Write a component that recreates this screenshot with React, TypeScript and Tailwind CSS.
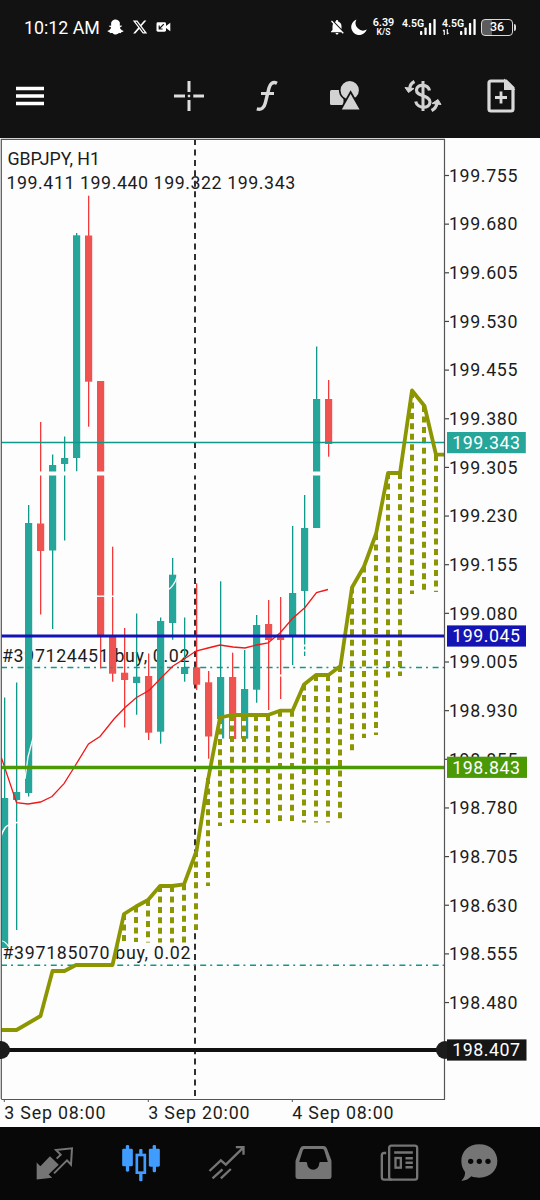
import type { ReactNode } from "react";
import { FaSnapchatGhost } from "react-icons/fa";
import { FaXTwitter } from "react-icons/fa6";
import { MdNotificationsOff } from "react-icons/md";

type Candle = { up: boolean; high: number; low: number; top: number; bottom: number };

const TEAL = "#26a69a";
const TEAL_DARK = "#0f998a";
const RED = "#ef5350";
const RED_DARK = "#f23a3a";
const OLIVE = "#8c9600";
const PAPER = "#fdfdfd";

const c = (up: boolean, high: number, low: number, top: number, bottom: number): Candle => ({ up, high, low, top, bottom });

const candles: Candle[] = [
  c(true, 697.5, 948, 798, 948),
  c(true, 682.5, 930, 792, 800),
  c(true, 505, 796.5, 523, 793),
  c(false, 422, 614.5, 523.5, 551),
  c(true, 454.5, 629, 465, 550.5),
  c(true, 436.5, 540.5, 458, 464),
  c(true, 233, 471.5, 235.3, 458),
  c(false, 195.7, 426.7, 235.5, 381.7),
  c(false, 381, 668.5, 381, 635),
  c(false, 546.7, 681.7, 635, 673.7),
  c(false, 628, 727.5, 672.7, 680),
  c(true, 613.5, 714.7, 676.7, 683),
  c(false, 653.5, 740, 676, 732.7),
  c(true, 617.5, 743.7, 621, 731.7),
  c(true, 558, 639.7, 574.7, 623),
  c(true, 617.5, 681.7, 667, 674),
  c(false, 583.3, 690, 667.3, 684.7),
  c(false, 671, 758.7, 682.3, 736.5),
  c(true, 581.3, 738.5, 677, 738.5),
  c(false, 652.7, 739, 677, 739),
  c(true, 650, 738.7, 689, 738.7),
  c(true, 615, 702.7, 625, 689.7),
  c(false, 600, 710, 624, 640),
  c(false, 597, 699, 637, 640),
  c(true, 526, 665, 593, 636),
  c(true, 495, 656, 528, 591),
  c(true, 346.5, 528, 399, 528),
  c(false, 380, 456.7, 399, 444),
];

const average =
  "1.5,758 16.5,802.7 28,804 40.5,802 52,796.5 64,783.7 75,766 88.5,744 100,736.5 114,719 125,707.5 136.5,697.5 149,690.5 160,679 173,666 185,658.5 196,651 208,648 220,645 233,647 245,648 256.7,645 268,643 280,633 292.5,618.5 305,607.5 316.5,592.5 328,589.5";

const cloud =
  "1.5,1030 16.5,1030 40.5,1016 52.5,971 64.5,971 76,965 112.5,965 124,914 136,906.5 148,900 160,886 172,886 184,884.3 196.5,851 208,780 220,717.5 232,715 268,715 280,710.7 292.5,710.7 304,684.5 316,675 328.5,675 340.5,666 352,587.5 364,566.5 376,534 388,473 400,473 412,390.5 424.5,406 436,454.7 444,454.7";

const cloudColumns: [number, number, number][] = [
  [124, 914, 941], [136, 906.5, 942], [148, 900, 942.5], [160, 886, 942.5], [172, 886, 942.5], [184, 884.3, 942.5],
  [196, 851, 930], [208, 778, 886], [220, 718, 826], [232, 715, 823], [244, 715, 823], [256, 715, 823], [268, 715, 823],
  [280, 710.7, 821], [292, 710.7, 821], [304, 684.5, 822.5], [316, 675, 822.5], [328, 675, 822.5], [340, 666, 822.5],
  [352, 587.5, 751], [364, 566.5, 738], [376, 534, 735], [388, 473, 678], [400, 473, 676], [412, 392, 594], [424, 406, 590],
  [436, 455, 592],
];

const prices = [
  "199.755", "199.680", "199.605", "199.530", "199.455", "199.380", "199.305", "199.230", "199.155",
  "199.080", "199.005", "198.930", "198.855", "198.780", "198.705", "198.630", "198.555", "198.480",
];

const dates: [number, string][] = [[4, "3 Sep 08:00"], [148, "3 Sep 20:00"], [292, "4 Sep 08:00"]];

function Tag({ y, width, fill, label }: { y: number; width: number; fill: string; label: string }) {
  return (
    <g>
      <rect x="447" y={y - 10.6} width={width} height="21.2" fill={fill} />
      <text x="452.3" y={y + 6.2} textLength="67.8" fill="#fff">{label}</text>
    </g>
  );
}

function Chart() {
  return (
    <svg className="block h-[989px] w-[540px] bg-[#fdfdfd] font-['Roboto',sans-serif] text-[17.8px]" viewBox="0 138 540 989" fill="#1c1c1c">
      <clipPath id="plot"><rect x="1" y="139" width="443.5" height="960" /></clipPath>
      <text x="7.4" y="165" textLength="92.5">GBPJPY, H1</text>
      <text x="6.4" y="189" textLength="288.8">199.411 199.440 199.322 199.343</text>
      <text x="2" y="661.7" textLength="187.5">#397124451 buy, 0.02</text>
      <text x="2.5" y="959.4" textLength="188">#397185070 buy, 0.02</text>
      <path d="M195 139V1099" stroke="#303030" strokeWidth="2" strokeDasharray="6 4.45" />
      <g clipPath="url(#plot)">
        {candles.map((k, i) => (
          <g key={i}>
            <rect x={4 + 12 * i} y={k.high} width="1.3" height={k.low - k.high} fill={k.up ? TEAL_DARK : RED_DARK} />
            <rect x={1 + 12 * i} y={k.top} width="7.2" height={k.bottom - k.top} fill={k.up ? TEAL : RED} />
          </g>
        ))}
        <g fill="none" stroke={PAPER}>
          <path d="M36 473.6H330" strokeWidth="4" />
          <path d="M95 596.2H120" strokeWidth="1.4" />
          <path d="M168 590Q174 586 177 577" strokeWidth="1.2" />
          <path d="M25 779L28 757L33 738" strokeWidth="1.3" />
          <path d="M0 839Q4 826 9 825L20 821.5" strokeWidth="1.6" />
          <path d="M2 941Q5 941 9 947" strokeWidth="1.2" />
          <path d="M278 675.5H284M302 645.5H308M302 650.5H308" strokeWidth="2" />
          <path d="M218.5 719V741" strokeWidth="7" />
        </g>
        {cloudColumns.map(([x, top, bottom]) => (
          <g key={x} strokeWidth="4">
            <path d={`M${x} ${top}V${bottom}`} stroke={PAPER} />
            <path d={`M${x} ${top}V${bottom}`} stroke={OLIVE} strokeDasharray="6 4.45" />
          </g>
        ))}
        <path d="M1 667.5H444M1 965.3H444" fill="none" stroke={TEAL_DARK} strokeWidth="1.4" strokeDasharray="6 4 2 4.6" />
        <path d="M1 442.5H444" stroke={TEAL_DARK} strokeWidth="1.3" />
        <polyline points={cloud} fill="none" stroke={OLIVE} strokeWidth="3.8" strokeLinejoin="round" />
        <polyline points={average} fill="none" stroke="#f01818" strokeWidth="1.3" />
        <path d="M1 636H444.5" stroke="#1414b4" strokeWidth="3" />
        <path d="M1 767.5H444.5" stroke="#4b9a05" strokeWidth="3.7" />
      </g>
      <path d="M1.3 1099V139.4H444.5V1099.5H1.3" fill="none" stroke="#555" strokeWidth="1.2" />
      <path d="M0 1050H446" stroke="#111" strokeWidth="3.8" />
      <circle cx="1" cy="1050" r="9" />
      <circle cx="445" cy="1050" r="9" />
      {prices.map((p, i) => (
        <g key={p}>
          <path d={`M445 ${175.5 + 48.65 * i}H449`} stroke="#444" strokeWidth="1.2" />
          <text x="449" y={181.8 + 48.65 * i} textLength="68.4">{p}</text>
        </g>
      ))}
      {dates.map(([x, label]) => (
        <g key={label}>
          <path d={`M${x + 0.3} 1099V1102`} stroke="#555" />
          <text x={x + 0.3} y="1119" textLength="101.2">{label}</text>
        </g>
      ))}
      <Tag y={442.6} width={78.8} fill={TEAL} label="199.343" />
      <Tag y={636} width={79} fill="#1414b4" label="199.045" />
      <Tag y={767.3} width={80} fill="#4b9a05" label="198.843" />
      <Tag y={1050} width={79.5} fill="#161616" label="198.407" />
    </svg>
  );
}

function Signal({ data }: { data?: boolean }) {
  return (
    <div className="flex h-[16px] w-[34px]">
      <div className="flex w-[18px] shrink-0 flex-col">
        <span className="whitespace-nowrap text-[10.5px] leading-[9px] font-semibold">4.5G</span>
        {data && (
          <svg className="mt-px h-[7px] w-[8px]" viewBox="0 0 8 7" stroke="#fff" strokeWidth="1.3" fill="none">
            <path d="M2 7V1M.5 2.5L2 1M5.5 0V6M7 4.5L5.5 6" />
          </svg>
        )}
      </div>
      <svg className="h-[16px] w-[16px] shrink-0" viewBox="0 0 16 16" fill="#fff">
        <rect x="0" y="12" width="2.3" height="4" rx=".7" />
        <rect x="4.4" y="8.5" width="2.3" height="7.5" rx=".7" />
        <rect x="8.9" y="4" width="2.3" height="12" rx=".7" />
        <rect x="13.4" y="0" width="2.3" height="16" rx=".7" />
      </svg>
    </div>
  );
}

function StatusBar() {
  return (
    <div className="flex h-[54px] items-center pl-6">
      <span className="w-[83px] whitespace-nowrap pt-px text-[17.8px] leading-none">10:12 AM</span>
      <FaSnapchatGhost className="h-4 w-[17px]" />
      <FaXTwitter className="ml-2 h-4 w-4" />
      <svg className="ml-2 h-[10px] w-[15px]" viewBox="0 0 15 10">
        <rect x=".5" y=".3" width="9.5" height="9.4" rx="1.4" fill="#fff" />
        <path d="M10 4L14.3 .8V9.2L10 6Z" fill="#fff" />
        <path d="M7.8 2.2L3.5 6.5M3.2 3.5V7H6.6" stroke="#121212" strokeWidth="1.2" fill="none" />
      </svg>
      <MdNotificationsOff className="ml-[156px] h-[18px] w-[20px]" />
      <svg className="ml-[4px] h-4 w-4" viewBox="0 0 16 16" fill="#fff">
        <path d="M5.5 .4A8 8 0 1 0 15.8 10.5A7.5 7.5 0 0 1 5.5 .4Z" />
      </svg>
      <div className="ml-[5px] flex w-[23px] flex-col items-center font-semibold">
        <span className="text-[10.8px] leading-[10px]">6.39</span>
        <span className="text-[8.5px] leading-[8px]">K/S</span>
      </div>
      <div className="ml-[7px]"><Signal /></div>
      <div className="ml-[6px]"><Signal data /></div>
      <div className="ml-[5px] flex h-[17px] w-[32px] items-center justify-center rounded-[4px] border-[1.5px] border-[#d9d9d9] bg-linear-to-r from-[#5c5c5c] from-[35%] to-[#121212] to-[35%] text-[12.5px] font-medium leading-none">36</div>
      <div className="ml-px h-[7px] w-[2px] rounded-r bg-[#d9d9d9]" />
    </div>
  );
}

function Tool({ label, gap, children }: { label: string; gap: string; children: ReactNode }) {
  return <button aria-label={label} className={`h-10 w-10 shrink-0 ${gap}`}>{children}</button>;
}

function Toolbar() {
  return (
    <div className="flex h-[84px] items-center pl-[10px]">
      <Tool label="Menu" gap="">
        <svg className="h-10 w-10" viewBox="10 76 40 40" fill="#fff">
          <path d="M16 86.8H44V90.2H16ZM16 94.3H44V97.7H16ZM16 101.8H44V105.2H16Z" />
        </svg>
      </Tool>
      <Tool label="Crosshair" gap="ml-[119px]">
        <svg className="h-10 w-10" viewBox="169 76 40 40" fill="none" stroke="#dedede" strokeWidth="3">
          <path d="M174 96H185M193.3 96H204M189 81V92M189 100V111" />
          <path d="M187.8 96H190.2" strokeWidth="2.4" />
        </svg>
      </Tool>
      <Tool label="Indicators" gap="ml-[38px]">
        <svg className="h-10 w-10" viewBox="247 76 40 40" fill="none" stroke="#d9d9d9" strokeWidth="3.4">
          <path d="M277 83.2C272.5 81 270 84 269 88L265.3 103C264 108.5 261 110 256.8 108.8" />
          <path d="M261 93.5H274" strokeWidth="3" />
        </svg>
      </Tool>
      <Tool label="Objects" gap="ml-[38px]">
        <svg className="h-10 w-10" viewBox="325 76 40 40" fill="#d2d2d2">
          <rect x="330" y="90" width="13.5" height="15" rx="1.5" />
          <circle cx="349.7" cy="90.2" r="10" stroke="#121212" strokeWidth="1.6" />
          <path d="M350.6 92L361.2 110.5H340.2Z" stroke="#121212" strokeWidth="1.8" />
        </svg>
      </Tool>
      <Tool label="New order" gap="ml-[38px]">
        <svg className="h-10 w-10" viewBox="403 76 40 40" fill="none" stroke="#d2d2d2" strokeWidth="3.2">
          <path d="M423 81V111" strokeWidth="3" />
          <path d="M429.5 90.5C428 84 417 83.5 416.5 89.8C416 97 430 94.5 430 102C430 109 417.5 109 415.7 101.5" />
          <path d="M414.5 81.5C411.5 83 410 85.5 409.8 88" />
          <path d="M405 87.5L414 88.5L408.5 92.5Z" fill="#d2d2d2" strokeWidth="1" />
          <path d="M431.5 110.5C434.5 109 436.5 106.5 437 103.5" />
          <path d="M432 103.5L438 99.5L441 104.5Z" fill="#d2d2d2" strokeWidth="1" />
        </svg>
      </Tool>
      <Tool label="New chart" gap="ml-[38px]">
        <svg className="h-10 w-10" viewBox="481 76 40 40" fill="none" stroke="#d9d9d9" strokeWidth="3.2">
          <path d="M491 81H506L513 88V109Q513 111 511 111H491Q489 111 489 109V83Q489 81 491 81Z" />
          <path d="M505 81V89H513Z" fill="#d9d9d9" strokeWidth="2" />
          <path d="M495 97.5H507M501 91.5V103.5" strokeWidth="2.8" />
        </svg>
      </Tool>
    </div>
  );
}

function Nav() {
  return (
    <nav className="flex h-[73px] bg-[#080808] pt-[11px] pl-[12px]">
      <button aria-label="Quotes" className="flex w-[86px] justify-center">
        <svg className="h-[48px] w-[48px]" viewBox="94 324 144 144" fill="none" stroke="#757575" strokeWidth="6">
          <path d="M114 405L122 413L151 383L173 404L143 433L151 441L114 445Z" fill="#757575" />
          <path d="M171 386L183 374L169 360L217 355L214 404L202 391L163 430" />
        </svg>
      </button>
      <button aria-label="Chart" className="flex w-[86px] justify-center">
        <svg className="h-[48px] w-[48px]" viewBox="352.5 324 144 144" fill="#409cff">
          <rect x="368" y="356" width="32" height="53" rx="4" />
          <rect x="379" y="345" width="10" height="80" rx="4" />
          <rect x="448" y="356" width="33" height="54" rx="4" />
          <rect x="459.5" y="345" width="10" height="82" rx="4" />
          <rect x="419" y="357" width="10" height="16" rx="3" />
          <rect x="419" y="428" width="10" height="26" rx="3" />
          <rect x="412" y="375" width="24" height="53" fill="none" stroke="#409cff" strokeWidth="8" />
        </svg>
      </button>
      <button aria-label="Trade" className="flex w-[86px] justify-center">
        <svg className="h-[48px] w-[48px]" viewBox="610.5 324 144 144" fill="none" stroke="#757575" strokeWidth="7">
          <path d="M630 423L664 391L679 404L732 352M709 351.5H732V374M639 445L669 418M664 445L694 417" />
        </svg>
      </button>
      <button aria-label="History" className="flex w-[86px] justify-center">
        <svg className="h-[48px] w-[48px]" viewBox="58.5 324 144 144" fill="#757575" fillRule="evenodd">
          <path d="M102 348H162Q169 348 172 355L185 389Q186 392 186 396V440Q186 447 179 447H85Q78 447 78 440V396Q78 392 79 389L92 355Q95 348 102 348ZM106 357Q102 357 100 361L89 396H110Q113 396 113 401A18 18 0 0 0 149 401Q149 396 152 396H175L164 361Q162 357 158 357Z" />
        </svg>
      </button>
      <button aria-label="News" className="flex w-[86px] justify-center">
        <svg className="h-[48px] w-[48px]" viewBox="316.5 324 144 144" fill="none" stroke="#757575" strokeWidth="7">
          <rect x="359" y="347" width="84" height="102" rx="7" />
          <path d="M350 369H344Q337 369 337 376V442Q337 449 344 449H367" />
          <path d="M374 367.5H430M408 385H430M408 398.5H430M408 412H430" strokeWidth="7.5" />
          <rect x="378" y="384" width="16" height="29" />
        </svg>
      </button>
      <button aria-label="Messages" className="flex w-[74px] justify-center">
        <svg className="h-[48px] w-[48px]" viewBox="555 324 144 144" fill="#757575">
          <path d="M628 343C661 343 682 365 682 393C682 421 661 443 628 443C619 443 611 442 604 439C596 448 585 453 574 452C582 445 586 436 585 426C578 417 574 406 574 393C574 365 595 343 628 343Z" />
          <circle cx="602" cy="394" r="8" fill="#080808" />
          <circle cx="628" cy="394" r="8" fill="#080808" />
          <circle cx="654" cy="394" r="8" fill="#080808" />
        </svg>
      </button>
    </nav>
  );
}

export default function App() {
  return (
    <div className="flex h-[1200px] w-[540px] flex-col overflow-hidden bg-[#fdfdfd] font-['Roboto',sans-serif]">
      <header className="bg-[#121212] text-white">
        <StatusBar />
        <Toolbar />
      </header>
      <main><Chart /></main>
      <Nav />
    </div>
  );
}
